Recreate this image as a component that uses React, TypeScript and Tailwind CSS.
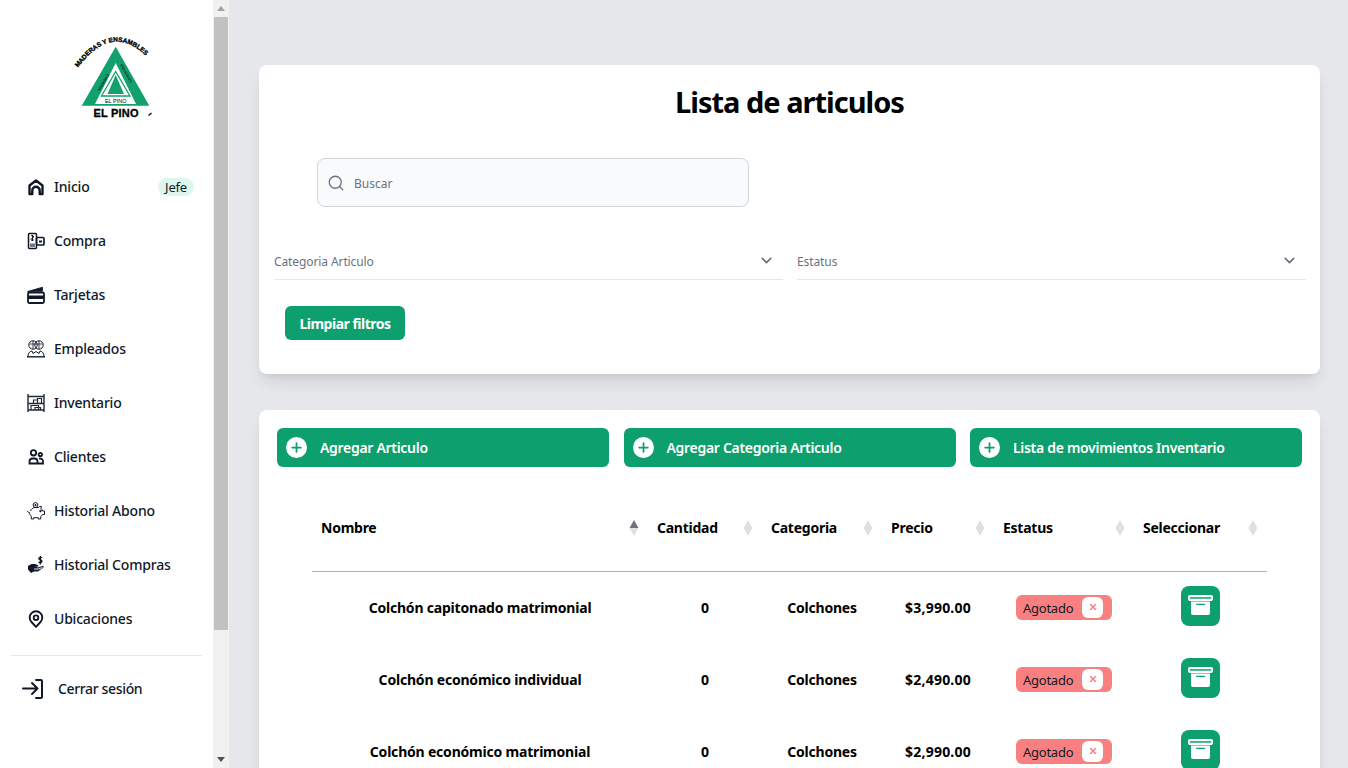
import React from "react";
import { Search, ChevronDown, X, Plus } from "lucide-react";

const ic = "w-[18px] h-[18px] shrink-0 text-gray-900";

function HomeIcon() {
  return (
    <svg viewBox="0 0 18 18" className={ic} fill="none" stroke="currentColor" strokeWidth="2.4" strokeLinejoin="round">
      <path d="M2.500 16V7.500L9 2.500l6.500 5V16h-2.800v-3.500a3.700 3.700 0 0 0-7.400 0V16z" />
    </svg>
  );
}
function CompraIcon() {
  return (
    <svg viewBox="0 0 18 18" className={ic} fill="none" stroke="currentColor" strokeWidth="1.500">
      <rect x="1.500" y="1.500" width="8" height="15" rx="1" />
      <rect x="3" y="11.500" width="5" height="3.500" fill="currentColor" stroke="none" opacity=".6" />
      <rect x="9.500" y="5.500" width="7.500" height="7.500" rx="1" strokeWidth="1.700" />
      <path d="M12 9.500h3" strokeWidth="2" />
      <path d="M4 4c1-1 3-.500 2.500 1S4 6 4 7.500 6.500 8.500 7 7.500M5.500 3v6" strokeWidth="1" />
    </svg>
  );
}
function CardIcon() {
  return (
    <svg viewBox="0 0 18 18" className={ic} fill="none" stroke="currentColor" strokeWidth="1.800">
      <path d="M.500 5.500L15.500 1.200v4z" fill="currentColor" strokeWidth=".8" />
      <rect x="1" y="6.500" width="16" height="10.500" rx="1.500" />
      <rect x="1" y="9.500" width="16" height="3.500" fill="currentColor" stroke="none" />
    </svg>
  );
}
function EmpleadosIcon() {
  return (
    <svg viewBox="0 0 18 18" className={ic} fill="none" stroke="currentColor" strokeWidth="1">
      <circle cx="6" cy="5" r="4.200" />
      <circle cx="12" cy="5" r="4.200" />
      <path d="M2.500 4h6.500M9 4h6.500M6 1v8M12 1v8" strokeWidth="0.800" />
      <path d="M1 16.500c0-3.500 1.500-5 4-5.500l1 2.500 3-2 3 2 1-2.500c2.500.5 4 2 4 5.500" />
      <path d="M0 16.800h18" strokeWidth="1.400" />
    </svg>
  );
}
function ShelfIcon() {
  return (
    <svg viewBox="0 0 18 18" className={ic} fill="none" stroke="#1f2937" strokeWidth="1.400">
      <path d="M1 0v18M17 0v18M1 2.500h16M1 9.500h16M1 16h16" />
      <path d="M6.500 9.500V6H10.500M10.500 9.500V4.500h4v5" strokeWidth="1.200" />
      <path d="M4 16v-4.500h7.500V16M8 16v-2.500h5.500V16" strokeWidth="1.200" />
    </svg>
  );
}
function UsersIcon() {
  return (
    <svg viewBox="0 0 18 18" className={ic} fill="none" stroke="currentColor" strokeWidth="1.800">
      <circle cx="6.500" cy="4.800" r="2.700" />
      <circle cx="13.300" cy="6.500" r="1.700" />
      <path d="M2.500 15.500v-2.300A3 3 0 0 1 5.500 10.500h2a3 3 0 0 1 3 3v2zM10.500 15.500h5.500v-2a3 3 0 0 0-4-2.800" />
    </svg>
  );
}
function PiggyIcon() {
  return (
    <svg viewBox="0 0 18 18" className={ic} fill="none" stroke="currentColor" strokeWidth="1">
      <circle cx="8.500" cy="3" r="2.400" />
      <circle cx="8.500" cy="3" r="1" fill="currentColor" stroke="none" />
      <path d="M3.500 9c.8-2.200 2.500-3.300 4.500-3.500h3.500c.8-.8 1.700-1.200 2.800-1.200l-.3 2.400c.8.600 1.300 1.300 1.700 2.300h1.800v3.500h-2c-.4.800-1 1.400-1.800 2v2.500h-2.500v-1.300h-4.500V17H4.300v-2.800C3 13 2.500 11.500 2.500 10.500 1.500 10.500.5 10 .3 8.800" />
      <circle cx="13.500" cy="9" r=".8" fill="currentColor" />
    </svg>
  );
}
function HandIcon() {
  return (
    <svg viewBox="0 0 18 18" className={ic}>
      <path d="M1 10l3.500-2h3.500l3 1.300c.8.500.3 1.700-.7 1.500L8 10.200l3 1.300 4.500-1.500c1-.3 1.800.8 1 1.500L11 15.500H7L4 17l-3-3.500z" fill="currentColor" />
      <path d="M7 13h4.500l4-1.500" stroke="#fff" strokeWidth=".9" fill="none" />
      <path d="M15 1.800c-1-.8-3.200-.6-3.200.9s3.200 1 3.200 2.600-2.400 1.700-3.400.7M13.400 0v8.500" stroke="currentColor" strokeWidth="1.300" fill="none" />
    </svg>
  );
}
function PinIcon() {
  return (
    <svg viewBox="0 0 18 18" className={ic} fill="none" stroke="currentColor" strokeWidth="1.900">
      <path d="M9 16.800L4.500 12A6.300 6.300 0 1 1 13.500 12z" strokeLinejoin="round" />
      <circle cx="9" cy="7.700" r="2.300" />
    </svg>
  );
}
function LogoutIcon() {
  return (
    <svg viewBox="0 0 21 20" className="w-[21px] h-5 text-gray-900" fill="none" stroke="currentColor" strokeWidth="2" strokeLinecap="round" strokeLinejoin="round">
      <path d="M1 9.500h14.500M10 4l5.500 5.500L10 15" />
      <path d="M14 1h5a1 1 0 0 1 1 1v16a1 1 0 0 1-1 1h-5" />
    </svg>
  );
}
function ArchiveIcon() {
  return (
    <svg viewBox="0 0 25 20" className="w-[25px] h-5 text-white -translate-y-[1px]" fill="none">
      <rect x="0" y="0" width="25" height="6" rx="1.800" fill="currentColor" />
      <rect x="1.800" y="2.200" width="21.400" height="1.500" fill="#0e9f6e" />
      <path d="M3 6.600h19V18a2 2 0 0 1-2 2H5a2 2 0 0 1-2-2z" fill="currentColor" />
      <rect x="8" y="8.800" width="9" height="1.300" rx=".6" fill="#0e9f6e" />
    </svg>
  );
}
function Logo() {
  return (
    <svg viewBox="0 0 110 105" className="w-[110px] h-[105px] font-['Liberation_Sans',sans-serif]">
      <path id="arc" d="M15 47 Q 56 -13 99 46" fill="none" />
      <text fontSize="6.500" fontWeight="900" fill="#000" stroke="#000" strokeWidth=".35">
        <textPath href="#arc" startOffset="5">MADERAS Y ENSAMBLES</textPath>
      </text>
      <path d="M55.700 21.700L89.300 80.700H21.700z" fill="#12a06d" />
      <path d="M55.700 38L76 79H35z" fill="#fff" />
      <path d="M55.700 46.500L70 71H41.500z" fill="#fff" stroke="#12a06d" strokeWidth="1.300" />
      <path d="M55.700 50L64 69H47.500z" fill="#12a06d" />
      <text x="55.700" y="78" textAnchor="middle" fontSize="5.500" fill="#000">EL PINO</text>
      <text x="0" y="0" fontSize="3.800" fill="#000" transform="translate(40 66) rotate(-60)">MADERAS</text>
      <text x="0" y="0" fontSize="3.400" fill="#000" transform="translate(60 40) rotate(60)">ENSAMBLES</text>
      <text x="56" y="92.300" textAnchor="middle" fontSize="11" fontWeight="900" fill="#000" stroke="#000" strokeWidth=".3" textLength="45">EL PINO</text>
      <path d="M88.500 90.500l3-2.500" stroke="#000" strokeWidth="1.200" />
    </svg>
  );
}

const nav: [React.ReactNode, string][] = [
  [<HomeIcon />, "Inicio"],
  [<CompraIcon />, "Compra"],
  [<CardIcon />, "Tarjetas"],
  [<EmpleadosIcon />, "Empleados"],
  [<ShelfIcon />, "Inventario"],
  [<UsersIcon />, "Clientes"],
  [<PiggyIcon />, "Historial Abono"],
  [<HandIcon />, "Historial Compras"],
  [<PinIcon />, "Ubicaciones"],
];

function Sort({ active }: { active?: boolean }) {
  return (
    <svg viewBox="0 0 10 16" className="w-[10px] h-4 shrink-0">
      <path d="M5 0L9.500 8H.5z" fill={active ? "#6b7280" : "#e0e0e0"} />
      <path d="M5 16L.5 8h9z" fill="#e0e0e0" />
    </svg>
  );
}

const heads = [
  { t: "Nombre", w: "w-[336px]", a: true },
  { t: "Cantidad", w: "w-[114px]" },
  { t: "Categoria", w: "w-[120px]" },
  { t: "Precio", w: "w-[112px]" },
  { t: "Estatus", w: "w-[140px]" },
  { t: "Seleccionar", w: "w-[133px]" },
];

const rows = [
  ["Colchón capitonado matrimonial", "0", "Colchones", "$3,990.00"],
  ["Colchón económico individual", "0", "Colchones", "$2,490.00"],
  ["Colchón económico matrimonial", "0", "Colchones", "$2,990.00"],
];

const cellTrack = ["tracking-[-0.2px]", "", "tracking-[-0.2px]", "tracking-[0.2px]"];

export default function App() {
  return (
    <div className="flex h-screen overflow-hidden bg-[#e5e7eb] font-['Noto_Sans',sans-serif] text-sm text-gray-900">
      <aside className="w-[213px] shrink-0 bg-white flex flex-col">
        <div className="pt-[25px] pl-[60px] h-[160px]">
          <Logo />
        </div>
        <nav className="flex flex-col">
          {nav.map(([icon, label], i) => (
            <div key={label} className="h-[54px] flex items-center pl-[27px] pr-[19px] gap-[9px]">
              {icon}
              <span className="font-medium flex-1 whitespace-nowrap tracking-[-0.2px]">{label}</span>
              {i === 0 && (
                <span className="h-[18px] px-[7px] rounded-full bg-[#def7ec] text-[13px] tracking-[-0.2px] flex items-center">Jefe</span>
              )}
            </div>
          ))}
        </nav>
        <div className="mx-[11px] mt-[9px] border-t border-gray-200" />
        <div className="flex items-center pl-[22px] gap-[15px] mt-[14px] h-[38px]">
          <LogoutIcon />
          <span className="font-medium whitespace-nowrap tracking-[-0.35px]">Cerrar sesión</span>
        </div>
      </aside>

      <div className="w-4 shrink-0 bg-[#f1f1f1] flex flex-col items-center">
        <div className="h-[17px] flex items-center justify-center">
          <div className="w-0 h-0 border-x-4 border-x-transparent border-b-[5px] border-b-[#a3a3a3]" />
        </div>
        <div className="w-[14px] h-[613px] bg-[#c1c1c1]" />
        <div className="flex-1" />
        <div className="h-[17px] flex items-center justify-center">
          <div className="w-0 h-0 border-x-4 border-x-transparent border-t-[5px] border-t-[#505050]" />
        </div>
      </div>

      <main className="flex-1 min-w-0 pl-[30px] pr-[28px] pt-[65px] overflow-hidden">
        <section className="bg-white rounded-lg shadow-lg h-[309px] flex flex-col">
          <h1 className="text-[29px] leading-9 font-bold tracking-[-1px] text-center text-black mt-[19px]">Lista de articulos</h1>
          <div className="ml-[58px] mt-[38px] w-[432px] h-[49px] rounded-lg border border-gray-300 bg-gray-50 flex items-center pl-[9px] gap-[9px] text-xs text-gray-500">
            <Search className="w-[18px] h-[18px] text-gray-500" strokeWidth={1.700} />
            <span className="pt-[2px]">Buscar</span>
          </div>
          <div className="flex gap-[14px] ml-[15px] mt-[36px] w-[1032px]">
            {["Categoria Articulo", "Estatus"].map((t) => (
              <div key={t} className="w-[509px] h-[37px] border-b border-gray-200 flex items-center justify-between text-xs text-gray-500 pr-[8px]">
                <span className="pt-[2px] tracking-[-0.1px]">{t}</span>
                <ChevronDown className="w-[17px] h-[17px] text-gray-500 -translate-y-[1px]" strokeWidth={2.300} />
              </div>
            ))}
          </div>
          <button className="ml-[26px] mt-[26px] w-[120px] h-[34px] pt-[2px] rounded-md bg-[#0e9f6e] text-white font-bold text-sm tracking-[-0.5px]">Limpiar filtros</button>
        </section>

        <section className="bg-white rounded-lg shadow-lg mt-[36px] h-[500px] px-[18px] pt-[18px]">
          <div className="grid grid-cols-3 gap-[14.500px]">
            {["Agregar Articulo", "Agregar Categoria Articulo", "Lista de movimientos Inventario"].map((t) => (
              <button key={t} className="h-[39px] rounded-md bg-[#0e9f6e] text-white font-semibold tracking-[-0.3px] flex items-center pl-[9px] gap-[13px]">
                <span className="w-[21px] h-[21px] rounded-full bg-white flex items-center justify-center">
                  <Plus className="w-[15px] h-[15px] text-[#0e9f6e]" strokeWidth={2.800} />
                </span>
                {t}
              </button>
            ))}
          </div>
          <table className="ml-[35px] mt-[23px] w-[955px] table-fixed border-collapse text-black">
            <thead>
              <tr className="h-[81px] border-b border-[#b3b3b3]">
                {heads.map((h) => (
                  <th key={h.t} className={`${h.w} pl-[9px] pr-[9px] pb-[5px] text-left`}>
                    <div className="flex items-center justify-between font-bold tracking-[-0.25px]">
                      {h.t}
                      <Sort active={h.a} />
                    </div>
                  </th>
                ))}
              </tr>
            </thead>
            <tbody>
              {rows.map((r) => (
                <tr key={r[0]} className="h-[72px] text-center font-bold">
                  {r.map((c, i) => (
                    <td key={i} className={`pt-[2px] ${cellTrack[i]}`}>{c}</td>
                  ))}
                  <td>
                    <span className="inline-flex items-center justify-between w-[96px] h-[25px] rounded-md bg-[#f98080] pl-[7px] pr-[9px] font-normal text-[13px] tracking-[-0.25px] text-gray-900 align-middle">
                      <span className="pt-[2px]">Agotado</span>
                      <span className="w-[21px] h-[21px] rounded-md bg-white flex items-center justify-center">
                        <X className="w-[10px] h-[10px] text-[#f98080]" strokeWidth={3.500} />
                      </span>
                    </span>
                  </td>
                  <td className="pb-[3px]">
                    <button className="inline-flex w-[39px] h-[40px] rounded-lg bg-[#0e9f6e] items-center justify-center align-middle">
                      <ArchiveIcon />
                    </button>
                  </td>
                </tr>
              ))}
            </tbody>
          </table>
        </section>
      </main>
    </div>
  );
}
